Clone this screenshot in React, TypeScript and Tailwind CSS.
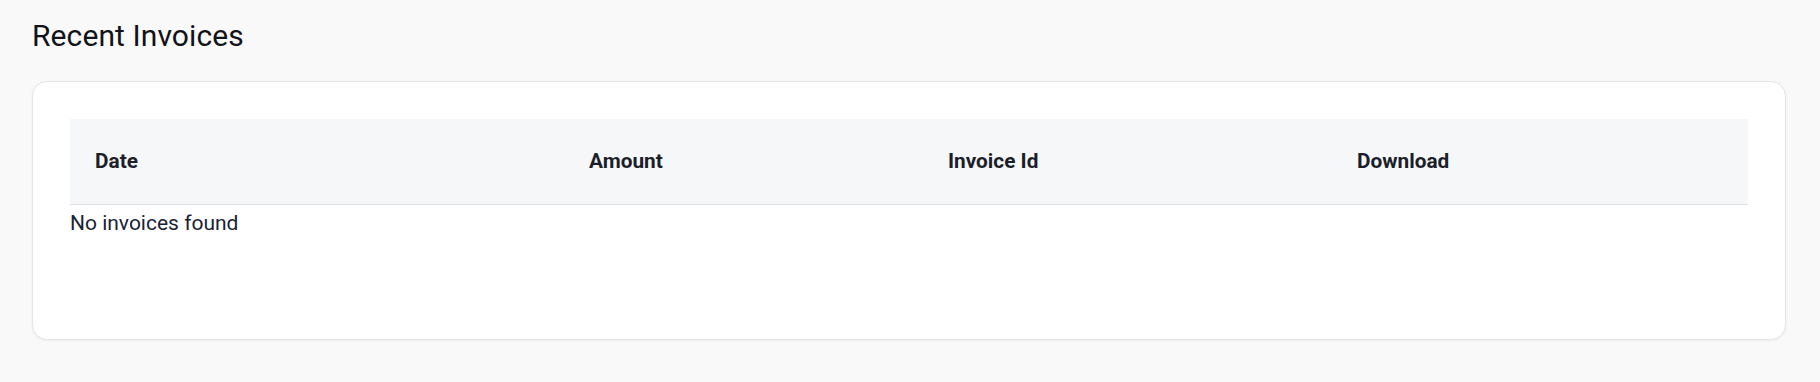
import React from 'react';

const columns = [
  { label: 'Date', width: 'w-[494px]' },
  { label: 'Amount', width: 'w-[359px]' },
  { label: 'Invoice Id', width: 'w-[409px]' },
  { label: 'Download', width: 'flex-1' },
];

const App: React.FC = () => {
  return (
    <div className="min-h-[382px] bg-[#f9f9f9] pl-8 pr-[34px] pt-[18px] pb-10 font-['Roboto',sans-serif]">
      <h2 className="text-[30px] leading-[36px] font-normal text-[#111318] tracking-[0.1px]">Recent Invoices</h2>

      <div className="mt-[27px] bg-white border border-[#e4e4ea] rounded-[15px] shadow-[0_1px_3px_rgba(0,0,0,0.05)] px-[37px] pt-[37px] pb-[37px]">
        <div className="flex h-[86px] items-center bg-[#f6f7f9] border-b border-[#dfe1e7]">
          {columns.map((col) => (
            <div key={col.label} className={`${col.width} pl-[25px] text-[20.8px] font-bold text-[#1c1f2a]`}>
              {col.label}
            </div>
          ))}
        </div>
        <div className="h-[97px] pt-[3px]">
          <p className="text-[21px] leading-[30px] text-[#1a2235]">No invoices found</p>
        </div>
      </div>
    </div>
  );
};

export default App;
